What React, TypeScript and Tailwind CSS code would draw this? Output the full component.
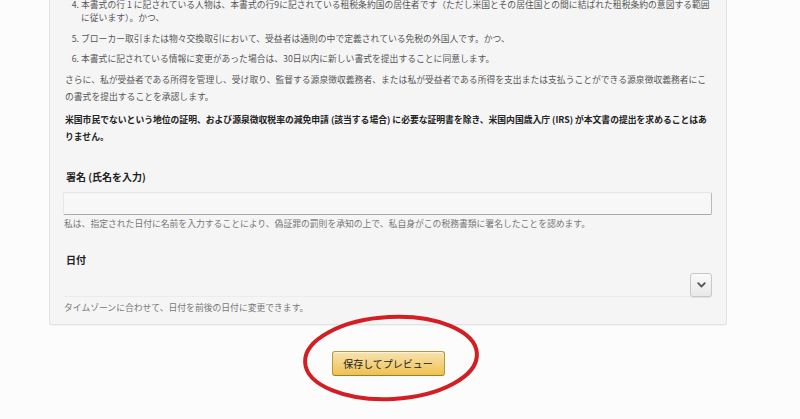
import React from "react";

const font = { fontFamily: '"Noto Sans CJK JP", "Noto Sans", sans-serif' };

function Item({ n, lines }: { n: string; lines: string[] }) {
  return (
    <div className="flex leading-[13px]">
      <span className="w-[16px] shrink-0 text-right pr-[2px]">{n}</span>
      <div className="whitespace-nowrap">
        {lines.map((l, i) => (
          <div key={i}>{l}</div>
        ))}
      </div>
    </div>
  );
}

export default function App() {
  return (
    <div
      className="relative w-[800px] h-[419px] overflow-hidden bg-[#fcfcfc] text-[8.8px] text-[#555]"
      style={font}
    >
      <div className="ml-[49px] w-[678px]">
        <div className="bg-[#f5f5f5] border border-t-0 border-[#e2e2e2] rounded-b-[3px] pl-[13px] pr-[14px] pb-[10px] shadow-[0_1px_1px_rgba(0,0,0,0.04)]">
          <div className="pl-[2px] -mt-[2px] flex flex-col gap-[7.5px]">
            <Item
              n="4."
              lines={[
                "本書式の行 1 に記されている人物は、本書式の行9に記されている租税条約国の居住者です（ただし米国とその居住国との間に結ばれた租税条約の意図する範囲",
                "に従います）。かつ、",
              ]}
            />
            <Item
              n="5."
              lines={[
                "ブローカー取引または物々交換取引において、受益者は通則の中で定義されている免税の外国人です。かつ、",
              ]}
            />
            <Item
              n="6."
              lines={[
                "本書式に記されている情報に変更があった場合は、30日以内に新しい書式を提出することに同意します。",
              ]}
            />
          </div>
          <div className="pl-[2px] mt-[6px] leading-[17px] whitespace-nowrap">
            <div>
              さらに、私が受益者である所得を管理し、受け取り、監督する源泉徴収義務者、または私が受益者である所得を支出または支払うことができる源泉徴収義務者にこ
            </div>
            <div>の書式を提出することを承認します。</div>
          </div>
          <div className="pl-[2px] mt-[6px] leading-[17px] whitespace-nowrap font-bold text-[#222]">
            <div>
              米国市民でないという地位の証明、および源泉徴収税率の減免申請 (該当する場合) に必要な証明書を除き、米国内国歳入庁 (IRS) が本文書の提出を求めることはあ
            </div>
            <div>りません。</div>
          </div>

          <div className="pl-[3px] mt-[24.5px] text-[10px] leading-[14px] font-bold text-[#222]">
            署名 (氏名を入力)
          </div>
          <div className="mt-[8px] h-[23px] border border-[#e6e6e6] border-b-[#a9a9a9] border-r-[#b9b9b9] rounded-[2px] bg-[#f7f7f7]" />
          <div className="pl-[1px] mt-[2.5px] leading-[13px] text-[#777] whitespace-nowrap">
            私は、指定された日付に名前を入力することにより、偽証罪の罰則を承知の上で、私自身がこの税務書類に署名したことを認めます。
          </div>

          <div className="pl-[3px] mt-[22.5px] text-[10px] leading-[14px] font-bold text-[#222]">
            日付
          </div>
          <div className="mt-[6px] h-[24px] flex">
            <div className="flex-1 border-b border-[#ececec]" />
            <div className="w-[22px] h-[24px] flex items-center justify-center border border-[#c8c8c8] rounded-[3px] bg-gradient-to-b from-[#fafafa] to-[#e9e9e9] shadow-[0_1px_0_rgba(0,0,0,0.08)]">
              <svg width="9" height="6" viewBox="0 0 9 6">
                <path d="M1.2 1.2 L4.5 4.5 L7.8 1.2" fill="none" stroke="#555" strokeWidth="1.8" strokeLinecap="round" strokeLinejoin="round" />
              </svg>
            </div>
          </div>
          <div className="pl-[1px] mt-[4.5px] leading-[13px] text-[#777] whitespace-nowrap">
            タイムゾーンに合わせて、日付を前後の日付に変更できます。
          </div>
        </div>

        <div className="mt-[26px] flex justify-center">
          <button className="w-[113px] h-[25px] border border-[#b8953e] border-b-[#9c7e31] rounded-[3px] bg-gradient-to-b from-[#f8e3ad] to-[#eec14d] text-[10px] leading-[23px] text-[#222] shadow-[inset_0_1px_0_rgba(255,255,255,0.6)]">
            保存してプレビュー
          </button>
        </div>
      </div>

      <svg
        className="absolute left-[300px] top-[312px] pointer-events-none"
        width="182"
        height="92"
        viewBox="0 0 182 92"
      >
        <ellipse
          cx="91"
          cy="46"
          rx="86"
          ry="41"
          fill="none"
          stroke="#d21f24"
          strokeWidth="4"
          transform="rotate(-3 91 46)"
        />
      </svg>
    </div>
  );
}
